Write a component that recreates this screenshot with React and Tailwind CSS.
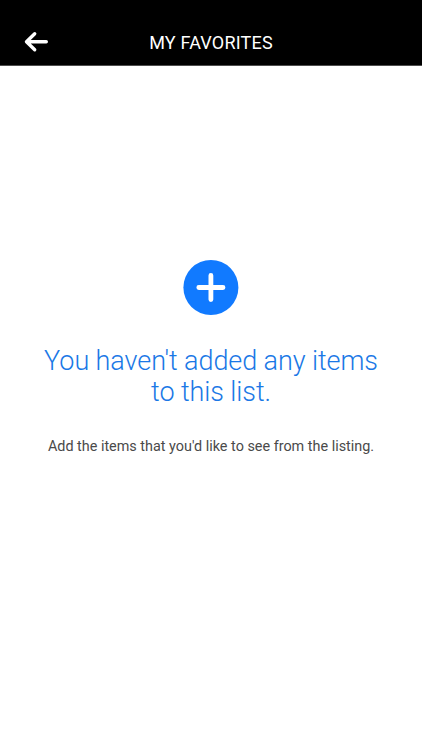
import React from "react";

function BackIcon() {
  return (
    <svg width="26" height="22" viewBox="0 0 26 22" fill="none" stroke="white" strokeWidth="3.4" strokeLinecap="round" strokeLinejoin="round">
      <path d="M11.7 2.8 L3.5 10.8 L11.7 18.8 M4.5 10.8 H23.3" />
    </svg>
  );
}

function AddIcon() {
  return (
    <svg width="56" height="55" viewBox="0 0 56 55">
      <circle cx="27.9" cy="27.5" r="27.5" fill="#117aff" />
      <path d="M27.9 15.4 V39.6 M15.8 27.5 H40" fill="none" stroke="white" strokeWidth="4.8" strokeLinecap="round" />
    </svg>
  );
}

export default function App() {
  return (
    <div className="flex h-[750px] w-[422px] flex-col bg-white font-['Roboto',sans-serif]">
      <header className="grid h-[66px] grid-cols-[1fr_auto_1fr] items-center border-b border-[#4d4d4d] bg-black pt-[18px]">
        <button className="pl-[23px]" aria-label="Back">
          <BackIcon />
        </button>
        <h1 className="pt-[3px] text-[18px] leading-6 tracking-[0.2px] text-white">MY FAVORITES</h1>
      </header>

      <main className="flex flex-col items-center pt-[194px] text-center">
        <AddIcon />
        <h2 className="mt-[31px] text-[27px] font-light leading-[31px] tracking-[-0.09px] text-[#1a78e6]">
          You haven't added any items
          <br />
          to this list.
        </h2>
        <p className="mt-[29px] text-[14.4px] leading-5 text-[#4a4a4a]">
          Add the items that you'd like to see from the listing.
        </p>
      </main>
    </div>
  );
}
